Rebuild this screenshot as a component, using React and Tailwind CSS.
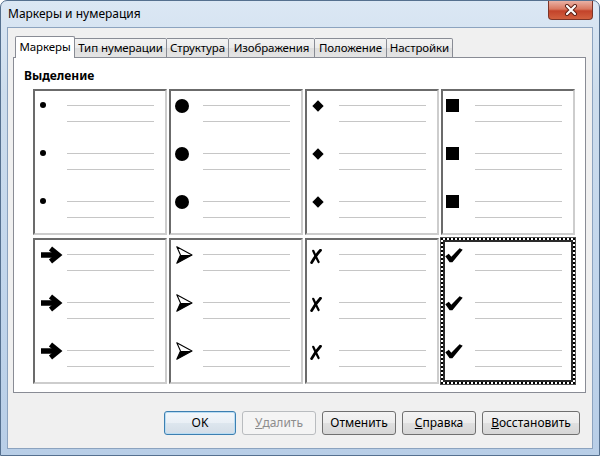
import React from "react";

const TABS = [
  { label: "Маркеры", w: "w-[60px]", active: true },
  { label: "Тип нумерации", w: "w-[92px]" },
  { label: "Структура", w: "w-[62px]" },
  { label: "Изображения", w: "w-[86px]" },
  { label: "Положение", w: "w-[72px]" },
  { label: "Настройки", w: "w-[66px]" },
];

const Dot = () => <div className="ml-[5px] mt-[11px] h-[6px] w-[6px] rounded-full bg-black" />;
const BigDot = () => <div className="ml-[4px] mt-[8px] h-[14px] w-[14px] rounded-full bg-black" />;
const Diamond = () => <div className="ml-[7px] mt-[11px] h-[8px] w-[8px] rotate-45 bg-black" />;
const Square = () => <div className="ml-[3px] mt-[8px] h-[13px] w-[13px] bg-black" />;

const Arrow = () => (
  <svg className="ml-[5px] mt-[6px]" width="23" height="18" viewBox="0 0 23 18">
    <path d="M1 9H17" stroke="#000" strokeWidth="5.5" />
    <path d="M10.5 2.5L18.5 9L10.5 15.5" stroke="#000" strokeWidth="5" fill="none" />
  </svg>
);

const ArrowHead = () => (
  <svg className="ml-[5px] mt-[6px]" width="17" height="18" viewBox="0 0 17 18">
    <path d="M0.8 0.8L16 9L0.8 17.2L4.5 9Z" fill="#fff" stroke="#000" strokeWidth="1.1" strokeLinejoin="round" />
    <path d="M4.5 9L16 9L0.8 17.2Z" fill="#000" />
  </svg>
);

const Cross = () => (
  <svg className="ml-[3px] mt-[9px]" width="12" height="15" viewBox="0 0 12 15">
    <path d="M3.2 1.8Q5.5 7 8.6 13" stroke="#000" strokeWidth="2.2" fill="none" strokeLinecap="round" />
    <path d="M10.5 1.2Q6 6 1.6 13.6" stroke="#000" strokeWidth="2.8" fill="none" strokeLinecap="round" />
  </svg>
);

const Check = () => (
  <svg className="ml-[2px] mt-[8px]" width="18" height="15" viewBox="0 0 18 15">
    <path d="M0.3 8.2L3.8 5.8L6.3 8.8L14.6 0.3L17.7 1.8L7.4 14.3L4.6 14.3Z" fill="#000" />
  </svg>
);

const Cell = ({ bullet, selected }) => (
  <div
    className={
      selected
        ? "h-[146px] border-2 border-dotted border-[#000] bg-white shadow-[0_0_0_0_#000,inset_0_0_0_2px_#2a2a2a] outline outline-1 outline-[#555]"
        : "h-[146px] border-2 border-t-[#6b6b6b] border-l-[#6b6b6b] border-r-[#cdcdcd] border-b-[#cdcdcd] bg-white"
    }
  >
    {[0, 1, 2].map((i) => (
      <div key={i} className="flex h-[48px]">
        <div className="w-[32px] shrink-0">{bullet}</div>
        <div className="flex flex-col gap-[15px] pt-[14px]">
          <div className="h-px w-[87px] bg-[#c6c6c6]" />
          <div className="h-px w-[87px] bg-[#c6c6c6]" />
        </div>
      </div>
    ))}
  </div>
);

const Btn = ({ children, kind }) => {
  let look =
    "border-[#707070] bg-[linear-gradient(to_bottom,#f4f4f4_0%,#ececec_50%,#e0e0e0_51%,#d6d6d6_100%)]";
  if (kind === "default")
    look =
      "border-[#3c7fb1] bg-[linear-gradient(to_bottom,#f2f7fb_0%,#e9eff5_50%,#dde6ee_51%,#d3dde7_100%)] shadow-[inset_0_0_0_1px_#b9dcf3]";
  if (kind === "disabled") look = "border-[#b9bcbf] bg-[#f4f4f4] text-[#8d8d8d]";
  return (
    <div className={"flex h-[24px] items-center justify-center rounded-[3px] border text-[12px] " + look}>
      {children}
    </div>
  );
};

export default function App() {
  const bullets = [
    <Dot />,
    <BigDot />,
    <Diamond />,
    <Square />,
    <Arrow />,
    <ArrowHead />,
    <Cross />,
    <Check />,
  ];

  return (
    <div className="flex h-[456px] w-[600px] flex-col rounded-t-[7px] border border-[#55708f] bg-[linear-gradient(to_bottom,#dbe7f4_0%,#cddded_20%,#c2d6ec_60%,#b8cee7_100%)] font-['Noto_Sans',sans-serif] text-[12px] text-black">
      {/* title bar */}
      <div className="flex h-[26px] shrink-0 items-start justify-between">
        <span className="pl-[7px] pt-[5px] text-[12px] leading-[16px]">Маркеры и нумерация</span>
        <div className="mr-[6px] flex h-[19px] w-[45px] items-center justify-center rounded-b-[4px] border border-t-0 border-[#7d3427] bg-[linear-gradient(to_bottom,#eab1a4_0%,#d9775f_45%,#c3432a_55%,#d2603f_100%)]">
          <svg width="14" height="12" viewBox="0 0 14 12">
            <path d="M3 2L11 10M11 2L3 10" stroke="#5a1d12" strokeWidth="4" strokeLinecap="round" />
            <path d="M3 2L11 10M11 2L3 10" stroke="#fff" strokeWidth="2.2" strokeLinecap="round" />
          </svg>
        </div>
      </div>

      {/* client area */}
      <div className="mx-[6px] mb-[6px] flex flex-1 flex-col border border-[#8ca3bf] bg-[#f0f0f0]">
        <div className="relative z-10 -mb-px ml-[7px] mt-[8px] flex h-[22px] items-end">
          {TABS.map((t) =>
            t.active ? (
              <div
                key={t.label}
                className={t.w + " flex h-[22px] items-center justify-center whitespace-nowrap rounded-t-[2px] border border-b-0 border-[#898c95] bg-white pb-[1px] text-[11.5px] tracking-[-0.1px]"}
              >
                {t.label}
              </div>
            ) : (
              <div
                key={t.label}
                className={t.w + " flex h-[20px] items-center justify-center whitespace-nowrap rounded-tr-[2px] border border-l-0 border-[#898c95] bg-[linear-gradient(to_bottom,#f3f3f3_0%,#ebebeb_50%,#dedede_51%,#e4e4e4_100%)] text-[11.5px] tracking-[-0.1px]"}
              >
                {t.label}
              </div>
            )
          )}
        </div>

        <div className="ml-[5px] h-[336px] w-[573px] border border-[#898c95] bg-white">
          <div className="pl-[10px] pt-[10px] text-[12px] font-bold leading-[16px]">Выделение</div>
          <div className="ml-[19px] mt-[5px] grid grid-cols-[repeat(4,134px)] gap-x-[2px] gap-y-[3px]">
            {bullets.map((b, i) => (
              <Cell key={i} bullet={b} selected={i === 7} />
            ))}
          </div>
        </div>

        <div className="mr-[12px] mt-[18px] flex justify-end gap-[6px]">
          <div className="w-[72px]">
            <Btn kind="default">OK</Btn>
          </div>
          <div className="w-[74px]">
            <Btn kind="disabled">
              <span className="underline">У</span>далить
            </Btn>
          </div>
          <div className="w-[74px]">
            <Btn>Отменить</Btn>
          </div>
          <div className="w-[74px]">
            <Btn>
              <span className="underline">С</span>правка
            </Btn>
          </div>
          <div className="w-[98px]">
            <Btn>
              <span className="underline">В</span>осстановить
            </Btn>
          </div>
        </div>
      </div>
    </div>
  );
}
